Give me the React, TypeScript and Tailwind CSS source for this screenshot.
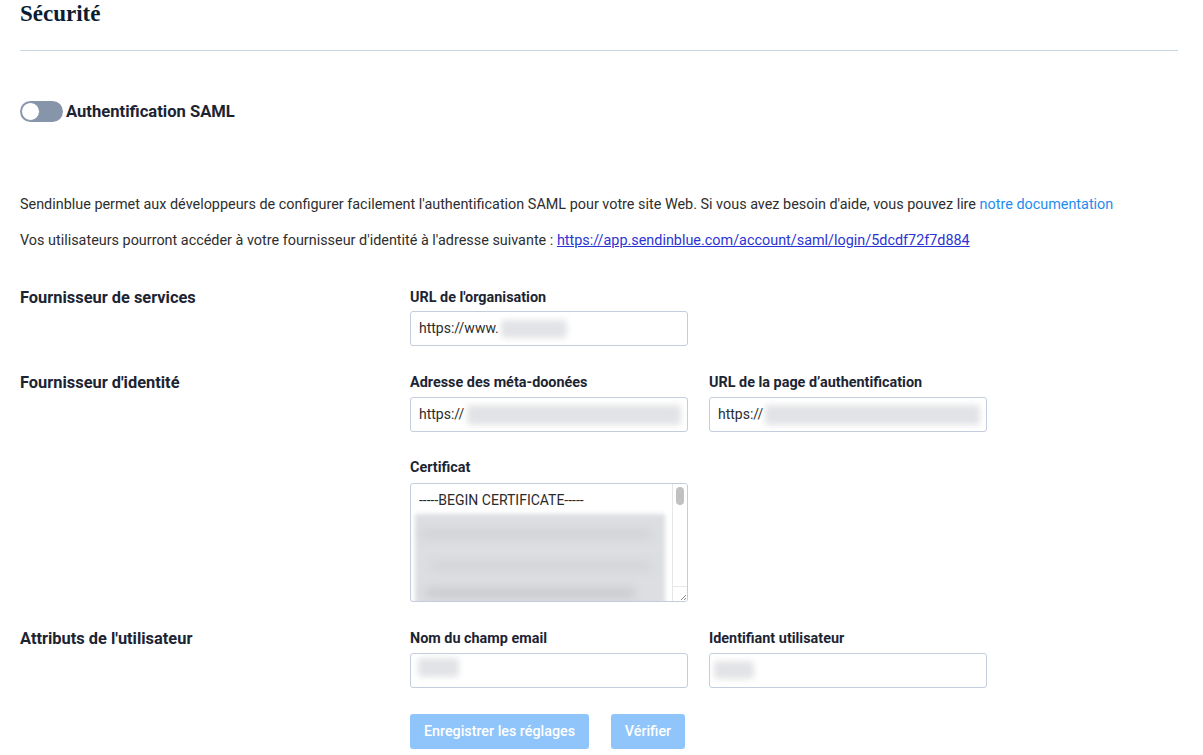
import React from "react";

const Blur = ({ className }: { className: string }) => (
  <span className={"absolute rounded-sm bg-[#e2e3e6] blur-[3px] " + className} />
);

const Label = ({ children, className = "" }: { children: React.ReactNode; className?: string }) => (
  <div className={"text-[14.4px] font-bold leading-[20px] text-[#1c2433] " + className}>{children}</div>
);

const Field = ({ children }: { children?: React.ReactNode }) => (
  <div className="relative flex h-[35px] w-[278px] items-center rounded-[3px] border border-[#c3cddb] bg-white pl-[8px] text-[14px] text-[#2b2b2b]">
    {children}
  </div>
);

export default function App() {
  return (
    <div className="min-h-[755px] bg-white px-[20px] pr-[25px] font-['Roboto',sans-serif] text-[#2e2e2e]">
      <div className="h-[51px] border-b border-[#c9d5e1]">
        <h1 className="font-['Liberation_Serif',serif] text-[23px] font-bold leading-[28px] text-[#0c1c33]">
          Sécurité
        </h1>
      </div>

      <div className="mt-[50px] flex items-center gap-[3px]">
        <div className="relative h-[21px] w-[43px] rounded-full bg-[#8795aa]">
          <span className="absolute left-[1px] top-[1px] h-[19px] w-[19px] rounded-full border border-[#8795aa] bg-white" />
        </div>
        <span className="text-[16.6px] font-bold leading-[21px] text-[#1c2433]">Authentification SAML</span>
      </div>

      <p className="mt-[73px] whitespace-nowrap text-[14.4px] leading-[20px] text-[#2e2e2e]">
        Sendinblue permet aux développeurs de configurer facilement l'authentification SAML pour votre site Web. Si vous
        avez besoin d'aide, vous pouvez lire <span className="text-[#1f8cf0]">notre documentation</span>
      </p>
      <p className="mt-[16px] whitespace-nowrap text-[14.4px] leading-[20px] text-[#2e2e2e]">
        Vos utilisateurs pourront accéder à votre fournisseur d'identité à l'adresse suivante :{" "}
        <span className="text-[#2c34d4] underline">https://app.sendinblue.com/account/saml/login/5dcdf72f7d884</span>
      </p>

      {/* Fournisseur de services */}
      <div className="mt-[37px] flex">
        <div className="w-[390px] text-[16.4px] font-bold leading-[20px] text-[#1c2433]">Fournisseur de services</div>
        <div>
          <Label className="mb-[3px]">URL de l'organisation</Label>
          <Field>
            <span>https://www.</span>
            <Blur className="left-[90px] top-[8px] h-[18px] w-[66px]" />
          </Field>
        </div>
      </div>

      {/* Fournisseur d'identité */}
      <div className="mt-[27px] flex">
        <div className="w-[390px] text-[16.4px] font-bold leading-[20px] text-[#1c2433]">Fournisseur d'identité</div>
        <div>
          <div className="flex gap-[21px]">
            <div>
              <Label className="mb-[4px]">Adresse des méta-doonées</Label>
              <Field>
                <span>https://</span>
                <Blur className="left-[56px] top-[7px] h-[20px] w-[214px]" />
              </Field>
            </div>
            <div>
              <Label className="mb-[4px]">URL de la page d’authentification</Label>
              <Field>
                <span>https://</span>
                <Blur className="left-[55px] top-[7px] h-[20px] w-[215px]" />
              </Field>
            </div>
          </div>
          <Label className="mb-[5px] mt-[26px]">Certificat</Label>
          <div className="relative h-[119px] w-[278px] overflow-hidden rounded-[3px] border border-[#c3cddb] bg-white">
            <div className="pl-[8px] pt-[6px] text-[14px] leading-[20px] text-[#2b2b2b]">-----BEGIN CERTIFICATE-----</div>
            <div className="absolute left-[4px] top-[30px] h-[95px] w-[250px] bg-[#dcdee1] blur-[2px]" />
            <div className="absolute left-[10px] top-[46px] h-[8px] w-[230px] rounded bg-[#cfd1d4] blur-[5px]" />
            <div className="absolute left-[20px] top-[78px] h-[8px] w-[220px] rounded bg-[#d1d3d6] blur-[5px]" />
            <div className="absolute left-[14px] top-[104px] h-[10px] w-[210px] rounded bg-[#c9cbcf] blur-[5px]" />
            <div className="absolute right-0 top-0 h-full w-[15px] border-l border-[#e6e6e6] bg-white">
              <div className="ml-[3px] mt-[3px] h-[18px] w-[8px] rounded-full bg-[#c1c1c1]" />
            </div>
            <div className="absolute bottom-0 right-0 h-[15px] w-[15px] border-l border-t border-[#e6e6e6] bg-white">
              <svg viewBox="0 0 15 15" className="h-[15px] w-[15px]">
                <path d="M13 8 L8 13 M13 11 L11 13" stroke="#8a8a8a" strokeWidth="1" />
              </svg>
            </div>
          </div>
        </div>
      </div>

      {/* Attributs */}
      <div className="mt-[27px] flex">
        <div className="w-[390px] text-[16.4px] font-bold leading-[20px] text-[#1c2433]">Attributs de l'utilisateur</div>
        <div>
          <div className="flex gap-[21px]">
            <div>
              <Label className="mb-[4px]">Nom du champ email</Label>
              <Field>
                <Blur className="left-[7px] top-[4px] h-[19px] w-[41px]" />
              </Field>
            </div>
            <div>
              <Label className="mb-[4px]">Identifiant utilisateur</Label>
              <Field>
                <Blur className="left-[4px] top-[7px] h-[18px] w-[40px]" />
              </Field>
            </div>
          </div>
          <div className="mt-[26px] flex gap-[22px]">
            <button className="h-[35px] w-[179px] rounded-[3px] bg-[#8fc5fb] text-[14.3px] font-medium text-white">
              Enregistrer les réglages
            </button>
            <button className="h-[35px] w-[74px] rounded-[3px] bg-[#8fc5fb] text-[14.3px] font-medium text-white">
              Vérifier
            </button>
          </div>
        </div>
      </div>
    </div>
  );
}
